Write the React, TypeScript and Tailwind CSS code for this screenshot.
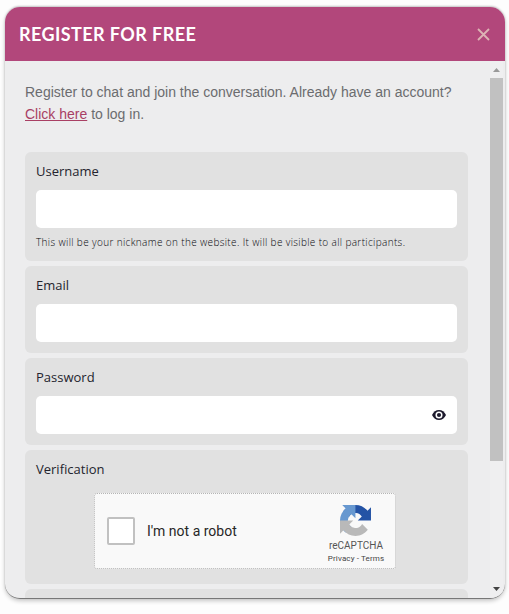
import type { ReactNode } from "react";

function Card({ label, className = "", children }: { label: string; className?: string; children?: ReactNode }) {
  return (
    <section className={`shrink-0 rounded-[6px] bg-[#e1e1e1] px-[11px] pt-[9px] ${className}`}>
      <div className="h-[29px] text-[13px] leading-[20px] text-[#24242e]">{label}</div>
      {children}
    </section>
  );
}

function Field({ children }: { children?: ReactNode }) {
  return (
    <div className="flex h-[38px] w-[421px] items-center justify-end rounded-[5px] bg-white pr-[11px]">{children}</div>
  );
}

function EyeIcon() {
  return (
    <svg width="14" height="14" viewBox="0 0 14 14">
      <path
        d="M0 7C1.3 3.9 4 2 7 2S12.7 3.9 14 7C12.7 10.1 10 12 7 12S1.3 10.1 0 7Z"
        fill="#1d1a2d"
      />
      <circle cx="7" cy="7" r="2.8" fill="#1d1a2d" stroke="#fff" strokeWidth="1.5" />
    </svg>
  );
}

function CaptchaLogo() {
  return (
    <svg className="mr-px" width="31" height="31" viewBox="0 0 64 64">
      <path fill="#2453a5" d="M64 31.955l-.033-1.37V4.687l-7.16 7.16C50.948 4.674 42.033.093 32.05.093c-10.4 0-19.622 4.96-25.458 12.64l11.736 11.86a15.55 15.55 0 0 1 4.754-5.334c2.05-1.6 4.952-2.906 8.968-2.906.485 0 .86.057 1.135.163 4.976.393 9.288 3.14 11.828 7.124l-8.307 8.307L64 31.953" />
      <path fill="#6798d0" d="M31.862.094l-1.37.033H4.594l7.16 7.16C4.58 13.147 0 22.06 0 32.046c0 10.4 4.96 19.622 12.64 25.458L24.5 45.768a15.55 15.55 0 0 1-5.334-4.754c-1.6-2.05-2.906-4.952-2.906-8.968 0-.485.057-.86.163-1.135.393-4.976 3.14-9.288 7.124-11.828l8.307 8.307L31.86.095" />
      <path fill="#b9b9b9" d="M.001 32.045l.033 1.37v25.898l7.16-7.16c5.86 7.173 14.774 11.754 24.76 11.754 10.4 0 19.622-4.96 25.458-12.64l-11.736-11.86a15.55 15.55 0 0 1-4.754 5.334c-2.05 1.6-4.952 2.906-8.968 2.906-.485 0-.86-.057-1.135-.163-4.976-.393-9.288-3.14-11.828-7.124l8.307-8.307c-10.522.04-22.4.066-27.295-.005" />
    </svg>
  );
}

function Captcha() {
  return (
    <div className="ml-[58px] mt-[5px] flex h-[76px] w-[302px] items-center rounded-[3px] border border-dotted border-[#b5b5b5] bg-[#f9f9f9] pl-[12px] font-[Roboto,sans-serif]">
      <div className="size-[28px] rounded-[2px] border-2 border-[#c1c1c1] bg-white" />
      <div className="ml-[12px] w-[179px] whitespace-nowrap text-[14px] leading-[20px] text-[#282727]">I'm not a robot</div>
      <div className="flex h-full w-[60px] flex-col items-center pt-[11px]">
        <CaptchaLogo />
        <div className="mt-[4px] whitespace-nowrap text-[10px] leading-[12px] text-[#555]">reCAPTCHA</div>
        <div className="mt-[2px] whitespace-nowrap text-[8px] leading-[10px] tracking-[0.13px] text-[#444]">Privacy - Terms</div>
      </div>
    </div>
  );
}

function ScrollBar() {
  return (
    <div className="flex w-[13px] flex-col items-center bg-[#efeff0]">
      <svg className="h-[17px] w-[13px] shrink-0" viewBox="0 0 13 17">
        <path d="M3 11L6.5 7L10 11Z" fill="#999" />
      </svg>
      <div className="h-[383px] w-full bg-[#c1c1c1]" />
      <svg className="mt-auto h-[17px] w-[13px] shrink-0" viewBox="0 0 13 17">
        <path d="M3 6L10 6L6.5 10Z" fill="#444" />
      </svg>
    </div>
  );
}

export default function App() {
  return (
    <div className="h-[614px] w-[509px] overflow-hidden bg-[#fdfdfd] pl-[5px] pt-[7px] font-['Open_Sans','Noto_Sans',sans-serif]">
      <div className="flex h-[592px] w-[500px] flex-col overflow-hidden rounded-[15px] border-b border-[#777] bg-[#ededee] shadow-[0_2px_4px_rgba(0,0,0,0.22),0_-1px_2px_rgba(0,0,0,0.2)]">
        <header className="flex h-[54px] shrink-0 items-center justify-between bg-[#b2477b] pl-[14px] pr-[15px]">
          <h1 className="whitespace-nowrap font-[Lato,sans-serif] text-[18px] font-bold leading-none tracking-[0.42px] text-white">REGISTER FOR FREE</h1>
          <svg width="13" height="13" viewBox="0 0 13 13" stroke="#dcb3b4" strokeWidth="1.8">
            <path d="M1 1L12 12M12 1L1 12" />
          </svg>
        </header>
        <div className="flex min-h-0 flex-1 justify-between pr-[2px]">
          <main className="flex w-[463px] flex-col gap-[5px] overflow-hidden pl-[20px] pt-[20px]">
            <p className="mb-[22px] h-[44px] shrink-0 whitespace-nowrap font-['Liberation_Sans',Arial,sans-serif] text-[14px] leading-[22px] text-[#6b6c6f]">
              Register to chat and join the conversation. Already have an account?
              <br />
              <a className="text-[#a94064] underline">Click here</a> to log in.
            </p>
            <Card label="Username" className="h-[109px]">
              <Field />
              <div className="mt-[7px] whitespace-nowrap text-[10px] font-light leading-[14px] tracking-[0.36px] text-[#08080e]">
                This will be your nickname on the website. It will be visible to all participants.
              </div>
            </Card>
            <Card label="Email" className="h-[87px]">
              <Field />
            </Card>
            <Card label="Password" className="h-[87px]">
              <Field>
                <EyeIcon />
              </Field>
            </Card>
            <Card label="Verification" className="h-[134px]">
              <Captcha />
            </Card>
            <section className="h-[30px] shrink-0 rounded-[6px] bg-[#e1e1e1]" />
          </main>
          <ScrollBar />
        </div>
      </div>
    </div>
  );
}
